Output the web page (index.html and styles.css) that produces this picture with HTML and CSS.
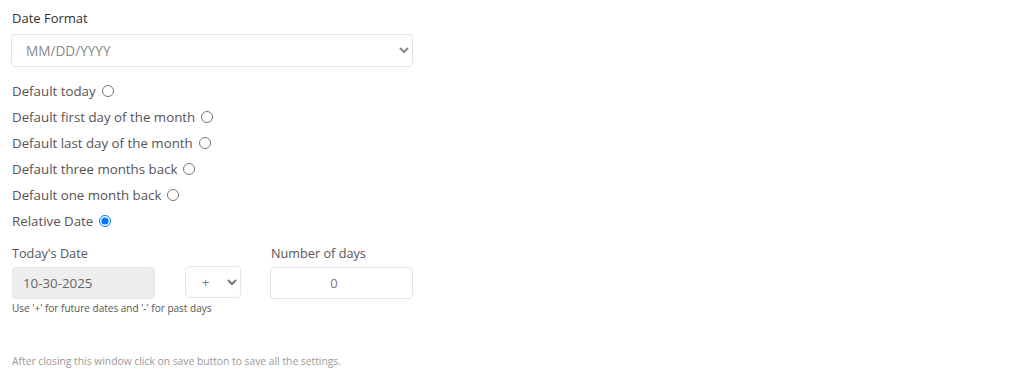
FILE: index.html
```html
<!DOCTYPE html>
<html lang="en">
<head>
    <meta charset="UTF-8">
    <title>Date Settings</title>
    <link rel="stylesheet" href="styles.css">
</head>
<body>
    <div class="settings">
        <label class="field-label" for="dateFormat">Date Format</label>
        <select id="dateFormat" class="format-select">
            <option>MM/DD/YYYY</option>
            <option>DD/MM/YYYY</option>
            <option>YYYY-MM-DD</option>
        </select>

        <!-- Default date options -->
        <div class="options">
            <label class="option">Default today <input type="radio" name="defaultDate"></label>
            <label class="option">Default first day of the month <input type="radio" name="defaultDate"></label>
            <label class="option">Default last day of the month <input type="radio" name="defaultDate"></label>
            <label class="option">Default three months back <input type="radio" name="defaultDate"></label>
            <label class="option">Default one month back <input type="radio" name="defaultDate"></label>
            <label class="option">Relative Date <input type="radio" name="defaultDate" checked></label>
        </div>

        <div class="relative">
            <div class="rel-col">
                <span class="small-label">Today's Date</span>
                <input type="text" class="today-input" value="10-30-2025" disabled>
            </div>
            <div class="rel-col">
                <span class="small-label">&nbsp;</span>
                <select class="sign-select">
                    <option>+</option>
                    <option>-</option>
                </select>
            </div>
            <div class="rel-col days-col">
                <span class="small-label">Number of days</span>
                <input type="number" class="days-input" value="0">
            </div>
        </div>
        <p class="hint">Use '+' for future dates and '-' for past days</p>

        <p class="footer-note">After closing this window click on save button to save all the settings.</p>
    </div>
</body>
</html>
```

FILE: styles.css
```css
body {
    margin: 0;
    padding: 0;
    font-family: 'Open Sans', sans-serif;
    color: #444;
    background-color: #fff;
}

.settings {
    padding: 9px 12px 0 11px;
    width: 402px;
}

.field-label {
    display: block;
    font-size: 13px;
    font-weight: 500;
    color: #333;
    margin-bottom: 7px;
    padding-left: 1px;
}

.format-select {
    width: 402px;
    height: 33px;
    padding: 0 10px 0 10px;
    border: 1px solid #e3e3e3;
    border-radius: 4px;
    background-color: #fff;
    color: #888;
    font-family: inherit;
    font-size: 13.6px;
}

.options {
    display: flex;
    flex-direction: column;
    margin-top: 11px;
}

.option {
    height: 26px;
    display: flex;
    align-items: center;
    font-size: 13.3px;
    color: #555;
    padding-left: 1px;
}

.option input {
    margin: 0 0 0 6px;
    width: 12px;
    height: 12px;
}

.relative {
    display: flex;
    gap: 30px;
    margin-top: 10px;
}

.rel-col {
    display: flex;
    flex-direction: column;
}

.days-col {
    margin-left: -1px;
}

.small-label {
    font-size: 12.7px;
    color: #555;
    height: 23px;
    padding-left: 1px;
}

.today-input {
    width: 143px;
    height: 32px;
    box-sizing: border-box;
    padding: 0 10px;
    border: 1px solid #e6e6e6;
    border-radius: 4px;
    background-color: #eee;
    color: #666;
    font-family: inherit;
    font-size: 13.3px;
    margin-left: 1px;
}

.sign-select {
    width: 56px;
    height: 32px;
    margin-top: -1px;
    padding: 0 8px 0 12px;
    border: 1px solid #e6e6e6;
    border-radius: 4px;
    background-color: #fff;
    color: #777;
    font-family: inherit;
    font-size: 13px;
}

.days-input {
    width: 143px;
    height: 32px;
    box-sizing: border-box;
    border: 1px solid #e3e3e3;
    border-radius: 4px;
    text-align: center;
    color: #777;
    font-family: inherit;
    font-size: 13px;
}

.hint {
    margin: 2px 0 0 1px;
    font-size: 10px;
    color: #555;
}

.footer-note {
    margin: 39px 0 0 1px;
    font-size: 10.3px;
    color: #999;
}
```
